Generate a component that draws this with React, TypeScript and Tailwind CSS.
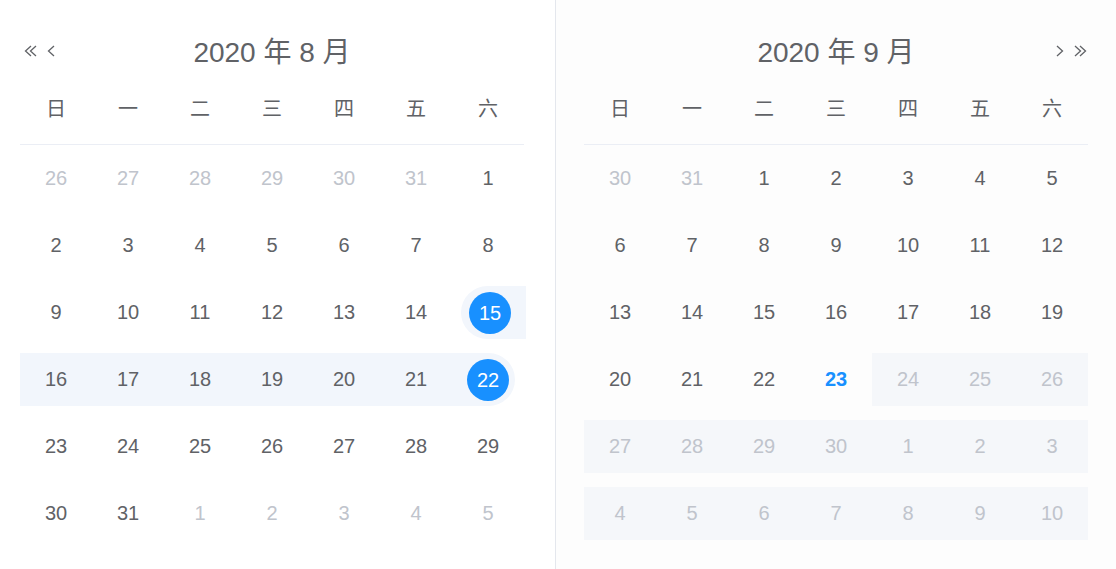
import React from "react";

type Cell = {
  day: number;
  kind?: "other" | "disabled" | "today";
  range?: "in" | "start" | "end";
};

const WEEK = ["日", "一", "二", "三", "四", "五", "六"];

const font = "font-['Liberation_Sans','Noto_Sans_CJK_SC',sans-serif]";

const aug: Cell[][] = [
  [26, 27, 28, 29, 30, 31].map((d) => ({ day: d, kind: "other" as const })).concat([{ day: 1 }]),
  [2, 3, 4, 5, 6, 7, 8].map((d) => ({ day: d })),
  [9, 10, 11, 12, 13, 14].map((d) => ({ day: d } as Cell)).concat([{ day: 15, range: "start" }]),
  [16, 17, 18, 19, 20, 21].map((d) => ({ day: d, range: "in" } as Cell)).concat([{ day: 22, range: "end" }]),
  [23, 24, 25, 26, 27, 28, 29].map((d) => ({ day: d })),
  [{ day: 30 }, { day: 31 } as Cell].concat([1, 2, 3, 4, 5].map((d) => ({ day: d, kind: "other" as const }))),
];

const sep: Cell[][] = [
  [{ day: 30, kind: "other" }, { day: 31, kind: "other" } as Cell].concat([1, 2, 3, 4, 5].map((d) => ({ day: d }))),
  [6, 7, 8, 9, 10, 11, 12].map((d) => ({ day: d })),
  [13, 14, 15, 16, 17, 18, 19].map((d) => ({ day: d })),
  [{ day: 20 }, { day: 21 }, { day: 22 }, { day: 23, kind: "today" } as Cell].concat(
    [24, 25, 26].map((d) => ({ day: d, kind: "disabled" as const }))
  ),
  [27, 28, 29, 30, 1, 2, 3].map((d) => ({ day: d, kind: "disabled" as const })),
  [4, 5, 6, 7, 8, 9, 10].map((d) => ({ day: d, kind: "disabled" as const })),
];

const Single = ({ flip }: { flip?: boolean }) => (
  <svg width="8" height="12" viewBox="0 0 8 12" className={flip ? "rotate-180" : ""}>
    <path d="M7 1 L1.5 6 L7 11" fill="none" stroke="#606266" strokeWidth="1.3" />
  </svg>
);

const Double = ({ flip }: { flip?: boolean }) => (
  <svg width="15" height="12" viewBox="0 0 15 12" className={flip ? "rotate-180" : ""}>
    <path
      d="M8 1 L2.5 6 L8 11 M13 1 L7.5 6 L13 11"
      fill="none"
      stroke="#606266"
      strokeWidth="1.3"
    />
  </svg>
);

const DayCell = ({ c }: { c: Cell }) => {
  let band = "";
  if (c.range === "in") band = "bg-[#f2f6fc]";
  if (c.range === "start") band = "bg-[#f2f6fc] ml-[9px] -mr-[2px] rounded-l-[27px]";
  if (c.range === "end") band = "bg-[#f2f6fc] mr-[9px] rounded-r-[27px]";
  if (c.kind === "disabled") band = "bg-[#f5f7fa]";

  let text = "text-[#606266]";
  if (c.kind === "other" || c.kind === "disabled") text = "text-[#c0c4cc]";
  if (c.kind === "today") text = "text-[#1890ff] font-bold";

  // keep the circle on the cell's centre, not the band's
  const shift = c.range === "start" ? "mr-[7px]" : c.range === "end" ? "ml-[9px]" : "";

  return (
    <div className="flex h-[67px] items-center">
      <div className={`flex h-[53px] flex-1 items-center justify-center ${band}`}>
        {c.range === "start" || c.range === "end" ? (
          <span
            className={`flex h-[42px] w-[42px] items-center justify-center rounded-full bg-[#1890ff] text-white ${shift}`}
          >
            {c.day}
          </span>
        ) : (
          <span className={`-mt-[2px] ${text}`}>{c.day}</span>
        )}
      </div>
    </div>
  );
};

const Month = ({
  title,
  rows,
  side,
}: {
  title: string;
  rows: Cell[][];
  side: "left" | "right";
}) => (
  <div className="w-[504px]">
    <div className="grid h-[54px] grid-cols-[1fr_auto_1fr] items-center">
      <div className="flex items-center gap-[9px] pl-[3px]">
        {side === "left" && (
          <>
            <Double />
            <Single />
          </>
        )}
      </div>
      <div className="pt-[3px] text-[28px] text-[#606266]">{title}</div>
      <div className="flex items-center justify-end gap-[9px]">
        {side === "right" && (
          <>
            <Single flip />
            <Double flip />
          </>
        )}
      </div>
    </div>
    <div className="grid h-[67px] grid-cols-7 items-center border-b border-[#ebeef5] pb-[5px] text-[20px] text-[#606266]">
      {WEEK.map((w) => (
        <div key={w} className="text-center">
          {w}
        </div>
      ))}
    </div>
    <div className="grid grid-cols-7 text-[20px]">
      {rows.flat().map((c, i) => (
        <DayCell key={i} c={c} />
      ))}
    </div>
  </div>
);

export default function App() {
  return (
    <div className={`flex h-[569px] w-[1116px] overflow-hidden bg-white ${font}`}>
      <div className="w-[556px] border-r border-[#e4e7ed] pl-[20px] pt-[24px]">
        <Month title="2020 年 8 月" rows={aug} side="left" />
      </div>
      <div className="flex-1 bg-[#fdfdfd] pl-[28px] pt-[24px]">
        <Month title="2020 年 9 月" rows={sep} side="right" />
      </div>
    </div>
  );
}
